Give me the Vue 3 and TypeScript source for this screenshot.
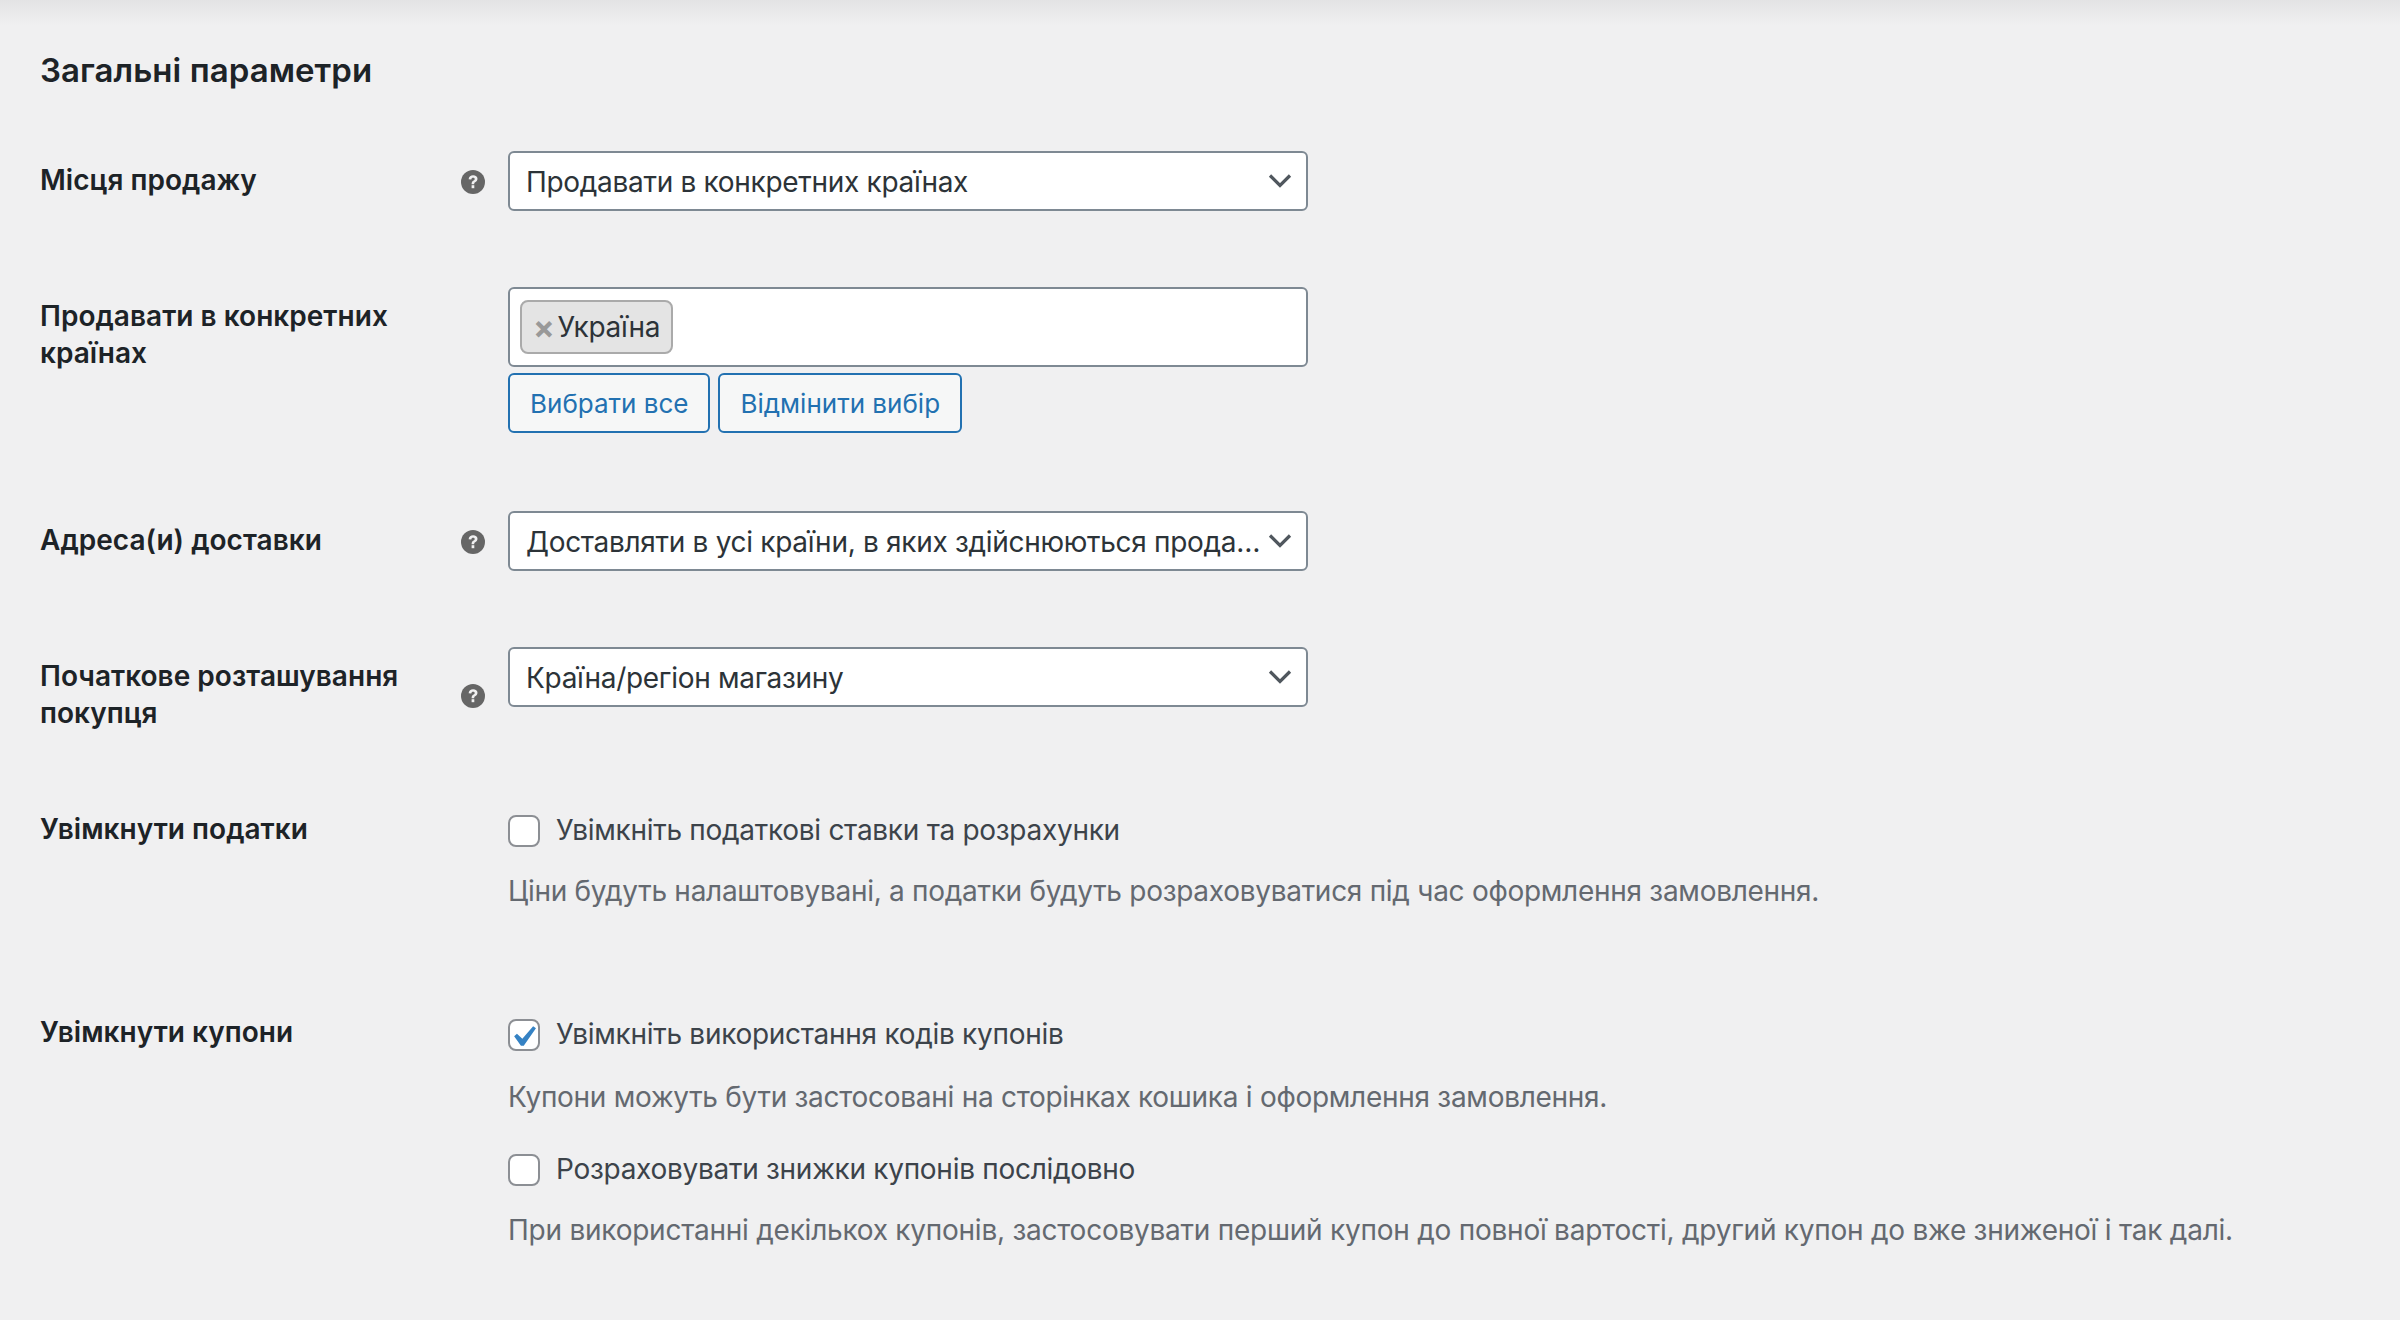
<template>
  <div class="page">
    <div class="top-shadow"></div>
    <h2 class="title">Загальні параметри</h2>

    <div class="row row-sell">
      <div class="label">Місця продажу</div>
      <div class="tip-cell"><HelpIcon /></div>
      <div class="field">
        <div class="select">
          <span class="select-text">Продавати в конкретних країнах</span>
          <ChevronIcon />
        </div>
      </div>
    </div>

    <div class="row row-countries">
      <div class="label">Продавати в конкретних країнах</div>
      <div class="tip-cell"></div>
      <div class="field">
        <div class="multi">
          <span class="chip"><span class="chip-x">×</span>Україна</span>
        </div>
        <div class="buttons">
          <button class="btn" type="button">Вибрати все</button>
          <button class="btn" type="button">Відмінити вибір</button>
        </div>
      </div>
    </div>

    <div class="row row-ship">
      <div class="label">Адреса(и) доставки</div>
      <div class="tip-cell"><HelpIcon /></div>
      <div class="field">
        <div class="select">
          <span class="select-text">Доставляти в усі країни, в яких здійснюються продажі</span>
          <ChevronIcon />
        </div>
      </div>
    </div>

    <div class="row row-location">
      <div class="label">Початкове розташування покупця</div>
      <div class="tip-cell tip-low"><HelpIcon /></div>
      <div class="field">
        <div class="select">
          <span class="select-text">Країна/регіон магазину</span>
          <ChevronIcon />
        </div>
      </div>
    </div>

    <div class="row row-taxes">
      <div class="label label-check">Увімкнути податки</div>
      <div class="tip-cell"></div>
      <div class="field">
        <label class="check-line">
          <span class="check"></span>
          Увімкніть податкові ставки та розрахунки
        </label>
        <p class="desc">Ціни будуть налаштовувані, а податки будуть розраховуватися під час оформлення замовлення.</p>
      </div>
    </div>

    <div class="row row-coupons">
      <div class="label label-check">Увімкнути купони</div>
      <div class="tip-cell"></div>
      <div class="field">
        <label class="check-line">
          <span class="check">
            <svg viewBox="0 0 20 20" width="42" height="42">
              <path d="M14.83 4.89l1.34.94-5.81 8.38H9.02L5.78 9.67l1.34-1.25 2.57 2.4z" fill="#3582c4" />
            </svg>
          </span>
          Увімкніть використання кодів купонів
        </label>
        <p class="desc">Купони можуть бути застосовані на сторінках кошика і оформлення замовлення.</p>
        <label class="check-line check-second">
          <span class="check"></span>
          Розраховувати знижки купонів послідовно
        </label>
        <p class="desc desc-long">При використанні декількох купонів, застосовувати перший купон до повної вартості, другий купон до вже зниженої і так далі.</p>
      </div>
    </div>
  </div>
</template>

<script setup lang="ts">
import { h } from 'vue'

const HelpIcon = () =>
  h('svg', { class: 'help', viewBox: '0 0 24 24', width: 24, height: 24 }, [
    h('circle', { cx: 12, cy: 12, r: 12, fill: '#666' }),
    h('path', {
      d: 'M7.6 9.2c.2-2.6 2.1-4 4.5-4 2.5 0 4.4 1.4 4.4 3.6 0 1.6-.9 2.5-2 3.2-1 .6-1.3 1-1.3 2.2h-2.6c0-1.9.5-2.7 1.7-3.5.9-.6 1.4-1 1.4-1.7 0-.8-.7-1.3-1.6-1.3-1 0-1.7.6-1.8 1.7z',
      fill: '#f0f0f1'
    }),
    h('rect', { x: 10.6, y: 15.2, width: 2.7, height: 3, fill: '#f0f0f1' })
  ])

const ChevronIcon = () =>
  h('svg', { class: 'chevron', viewBox: '0 0 24 24', width: 24, height: 24 }, [
    h('path', { d: 'M2 6.5L12 16.5 22 6.5', fill: 'none', stroke: '#50575e', 'stroke-width': 3.2 })
  ])
</script>

<style>
html,
body {
  margin: 0;
  background: #f0f0f1;
}
</style>

<style scoped>
.page {
  position: relative;
  box-sizing: border-box;
  width: 2400px;
  height: 1320px;
  padding: 50px 40px 0;
  background: #f0f0f1;
  overflow: hidden;
  font-family: Inter, "Noto Sans", sans-serif;
  font-size: 28px;
  line-height: 37px;
  letter-spacing: -0.28px;
  color: #3c434a;
}

.top-shadow {
  position: absolute;
  top: 0;
  left: 0;
  right: 0;
  height: 26px;
  background: linear-gradient(#e3e3e4, #f0f0f1);
}

.title {
  margin: 0;
  font-size: 33px;
  line-height: 40px;
  font-weight: 600;
  letter-spacing: 0.05px;
  color: #1d2327;
}

.row {
  display: grid;
  grid-template-columns: 418px 50px 1fr;
}

.row-sell {
  margin-top: 61px;
  height: 136px;
}

.row-countries {
  height: 224px;
}

.row-ship {
  height: 136px;
}

.row-location {
  height: 167px;
}

.row-taxes {
  height: 203px;
}

.label {
  align-self: start;
  margin-top: 11px;
  font-weight: 600;
  letter-spacing: 0.03px;
  color: #1d2327;
}

.label-check {
  margin-top: -3px;
}

.tip-cell {
  height: 62px;
  display: flex;
  align-items: center;
  padding-left: 3px;
}

.tip-low {
  height: 98px;
}

.help {
  display: block;
}

.field {
  min-width: 0;
}

.select {
  box-sizing: border-box;
  display: flex;
  align-items: center;
  width: 800px;
  height: 60px;
  padding: 2px 8px 0 16px;
  background: #fff;
  border: 2px solid #7e8993;
  border-radius: 6px;
  color: #2c3338;
  letter-spacing: -0.3px;
}

.select-text {
  flex: 1;
  min-width: 0;
  white-space: nowrap;
  overflow: hidden;
  text-overflow: ellipsis;
}

.chevron {
  flex: none;
  margin: -3px 6px 0 5px;
}

.multi {
  box-sizing: border-box;
  width: 800px;
  height: 80px;
  padding: 11px 10px;
  background: #fff;
  border: 2px solid #7e8993;
  border-radius: 6px;
}

.chip {
  box-sizing: border-box;
  display: inline-flex;
  align-items: center;
  height: 54px;
  padding: 0 11px;
  background: #e4e4e4;
  border: 2px solid #aaa;
  border-radius: 8px;
  color: #2c3338;
  letter-spacing: -0.3px;
}

.chip-x {
  margin-right: 3px;
  color: #999;
  font-size: 32px;
  font-weight: 700;
}

.buttons {
  display: flex;
  gap: 8px;
  margin-top: 6px;
}

.btn {
  box-sizing: border-box;
  height: 60px;
  padding: 0 20px;
  background: #f6f7f7;
  border: 2px solid #2271b1;
  border-radius: 6px;
  color: #2271b1;
  font: inherit;
  font-size: 26px;
  letter-spacing: 0;
}

.check-line {
  display: flex;
  align-items: center;
  gap: 16px;
  height: 37px;
  white-space: nowrap;
}

.row-taxes .check-line {
  margin-top: -2px;
}

.row-coupons .check-line:first-child {
  margin-top: -1px;
}

.check {
  box-sizing: border-box;
  flex: none;
  width: 32px;
  height: 32px;
  background: #fff;
  border: 2px solid #8c8f94;
  border-radius: 8px;
}

.check svg {
  display: block;
  margin: -5px -8px;
}

.desc {
  margin: 26px 0 0;
  color: #646970;
  white-space: nowrap;
}

.row-taxes .desc {
  margin-top: 24px;
}

.desc-long {
  margin-top: 24px;
  letter-spacing: -0.24px;
}

.check-second {
  margin-top: 35px;
}
</style>
